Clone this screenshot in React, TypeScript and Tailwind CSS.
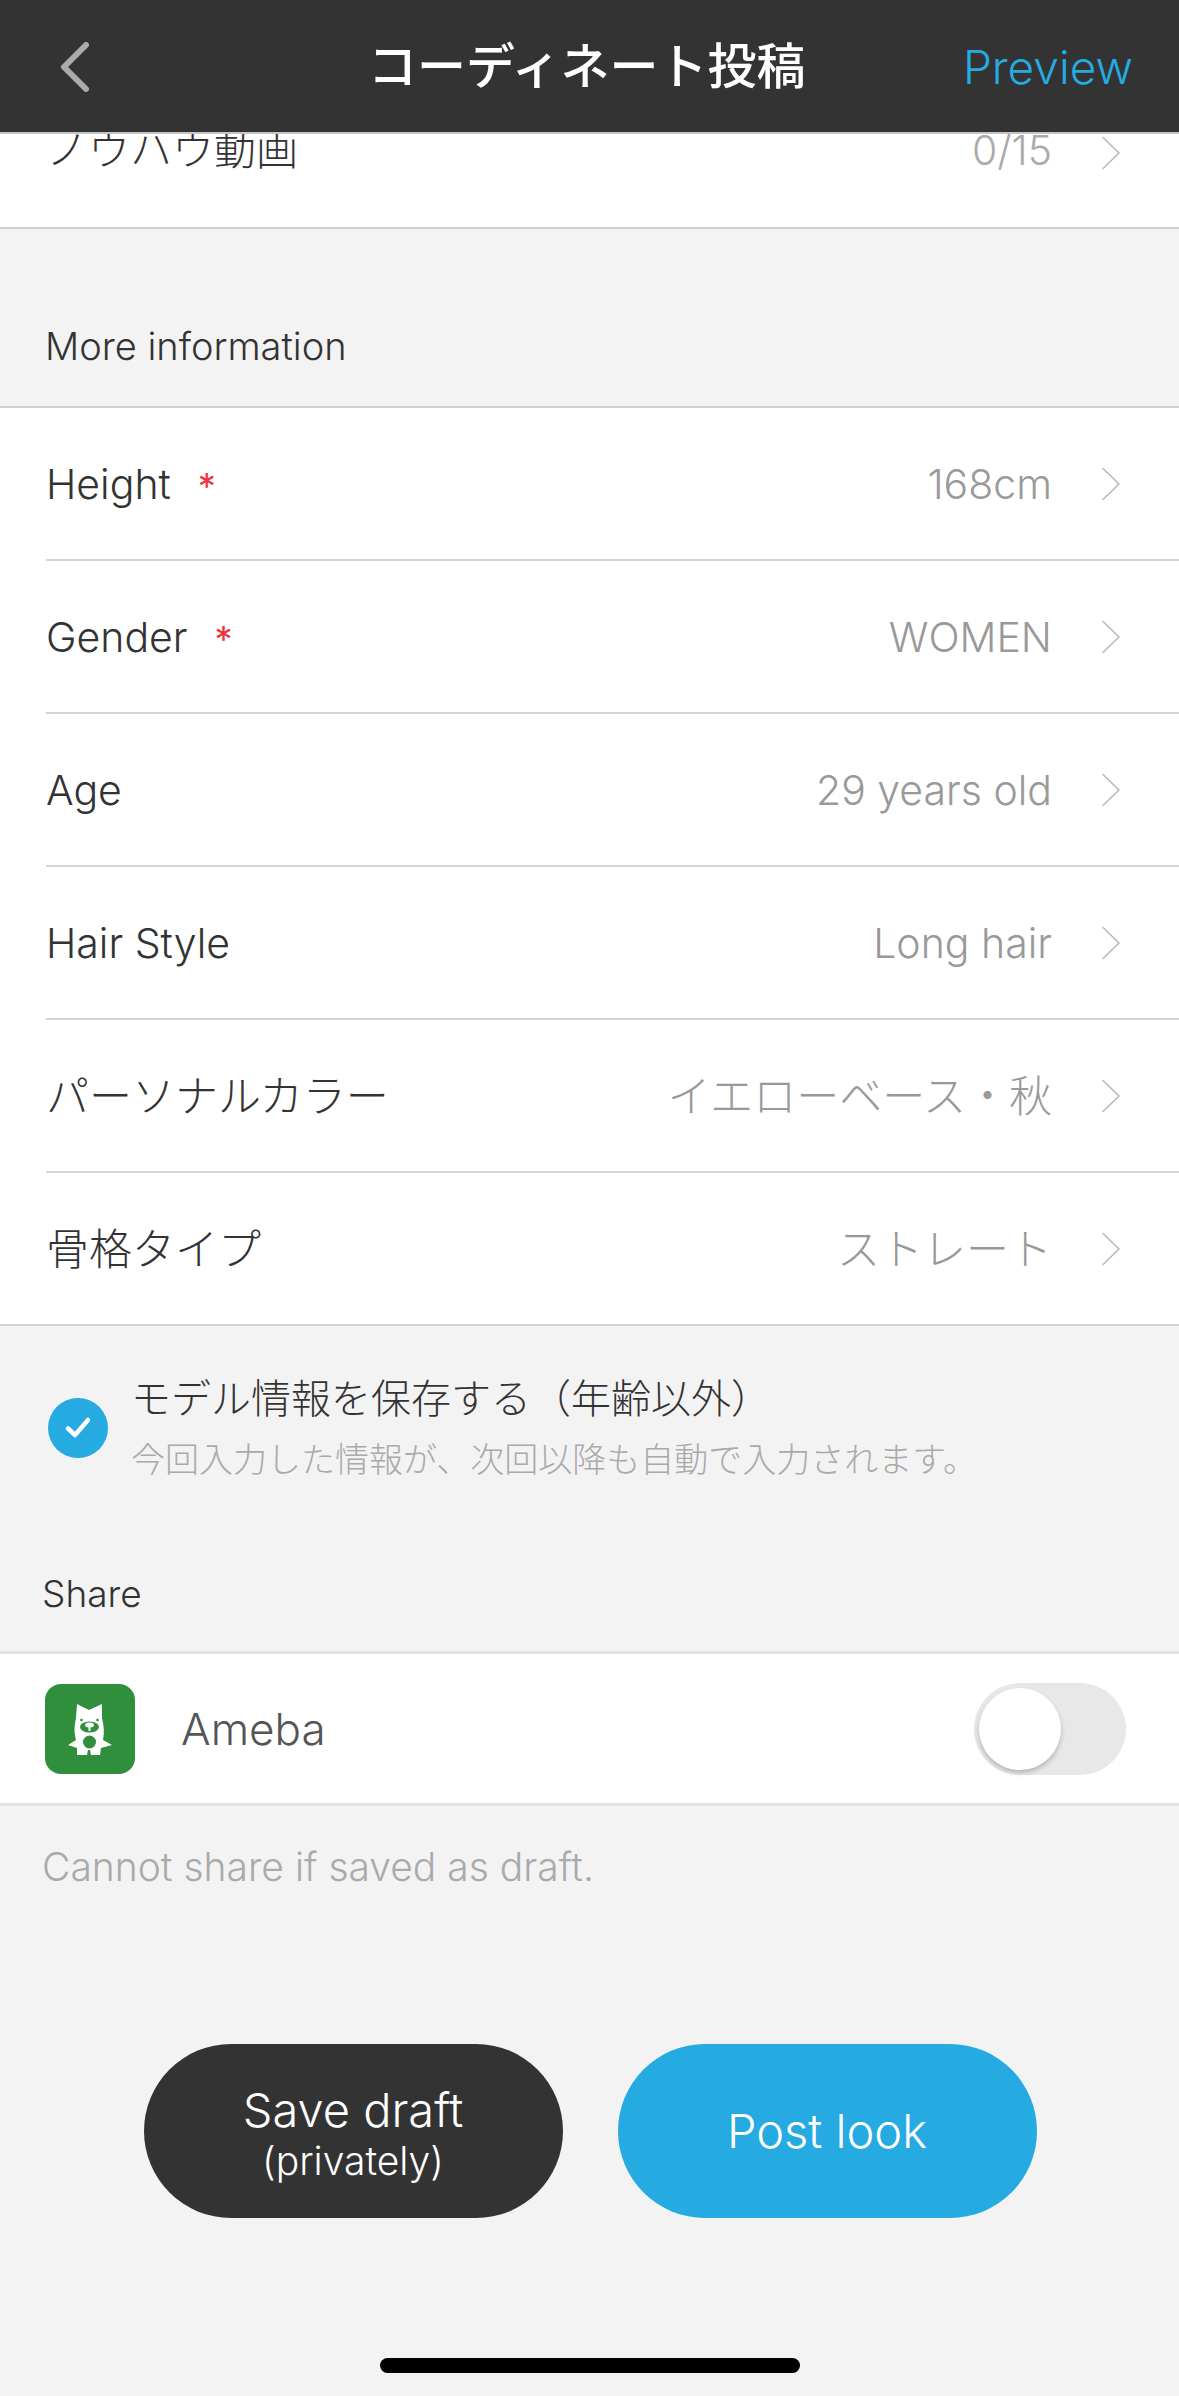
import React from 'react'

const font = "font-['Inter','Noto_Sans_CJK_JP',sans-serif]"

function Chevron() {
    return (
        <svg width="20" height="34" viewBox="0 0 20 34" fill="none" className="shrink-0">
            <path d="M2 1.5 L18 17 L2 32.5" stroke="#b8b8b8" strokeWidth="1.6" strokeLinecap="round" strokeLinejoin="round" />
        </svg>
    )
}

function Row({ label, value, required, last, jp }: { label: string; value: string; required?: boolean; last?: boolean; jp?: boolean }) {
    const size = jp ? "text-[43px]" : "text-[41px]"
    return (
        <div className={last ? "flex h-[153px] border-b-2 border-[#d4d4d4] pl-[46px]" : "flex h-[153px] pl-[46px]"}>
            <div className={last ? "flex flex-1 items-center pr-[58px]" : "flex flex-1 items-center border-b-2 border-[#d4d4d4] pr-[58px]"}>
                <span className={`${size} font-light leading-[50px] text-[#333]`}>{label}</span>
                {required && <span className="ml-[27px] mt-[4px] text-[36px] leading-[40px] text-[#ee3344]">*</span>}
                <span className={`${size} ml-auto mr-[49px] font-light leading-[50px] text-[#999]`}>{value}</span>
                <Chevron />
            </div>
        </div>
    )
}

function AmebaLogo() {
    return (
        <svg width="90" height="90" viewBox="0 0 90 90" className="shrink-0">
            <rect width="90" height="90" rx="16" fill="#2f8f3d" />
            <path d="M32 20 L44 26 L57 20 L57 34 Q60 46 58 56 L67 61 L56 64 L55 71 L46 71 L45 66 L43 66 L42 71 L32 71 L32 64 L23 61 L31 56 Q28 46 31 34 Z" fill="#fff" />
            <ellipse cx="44.5" cy="43" rx="9.5" ry="5.5" fill="#2f8f3d" />
            <ellipse cx="44.5" cy="41" rx="4.5" ry="2.5" fill="#fff" />
            <rect x="43.5" y="42" width="2" height="5" fill="#fff" />
            <circle cx="44.5" cy="58" r="6.5" fill="#2f8f3d" />
            <circle cx="36.5" cy="36" r="1.3" fill="#2f8f3d" />
            <circle cx="52.5" cy="36" r="1.3" fill="#2f8f3d" />
        </svg>
    )
}

export default function App() {
    return (
        <div className={`flex h-[2396px] w-[1179px] flex-col overflow-hidden bg-[#f3f3f3] ${font}`}>
            <div className="relative z-10 flex h-[134px] shrink-0 items-center border-b-2 border-[#c4c4c4] bg-[#333] pl-[60px] pr-[46px] pt-[2px]">
                <svg width="30" height="50" viewBox="0 0 30 50" fill="none" className="shrink-0">
                    <path d="M26 3 L4 25 L26 47" stroke="#ababab" strokeWidth="6" strokeLinecap="round" strokeLinejoin="round" />
                </svg>
                <div className="ml-[278px] text-[49px] font-medium leading-[60px] text-white">コーディネート投稿</div>
                <div className="ml-auto text-[46px] font-light leading-[60px] text-[#25aae1]">Preview</div>
            </div>

            <div className="flex h-[95px] shrink-0 items-start overflow-hidden border-b-2 border-[#d0d0d0] bg-white pl-[46px] pr-[58px]">
                <span className="-mt-[9px] text-[42px] font-light leading-[50px] text-[#333]">ノウハウ動画</span>
                <span className="-mt-[9px] ml-auto mr-[49px] text-[41px] font-light leading-[50px] text-[#aaa]">0/15</span>
                <div className="mt-[2px]"><Chevron /></div>
            </div>

            <div className="flex h-[179px] shrink-0 items-end border-b-2 border-[#d0d0d0] pb-[37px] pl-[45px]">
                <span className="text-[38px] font-light leading-[46px] text-[#333]">More information</span>
            </div>

            <div className="shrink-0 bg-white">
                <Row label="Height" value="168cm" required />
                <Row label="Gender" value="WOMEN" required />
                <Row label="Age" value="29 years old" />
                <Row label="Hair Style" value="Long hair" />
                <Row label="パーソナルカラー" value="イエローベース・秋" jp />
                <Row label="骨格タイプ" value="ストレート" last jp />
            </div>

            <div className="mt-[49px] flex shrink-0 items-center pl-[48px]">
                <div className="flex h-[60px] w-[60px] shrink-0 items-center justify-center rounded-full bg-[#25aae1]">
                    <svg width="30" height="30" viewBox="0 0 30 30" fill="none">
                        <path d="M5 15.5 L12 22 L25 7" stroke="#fff" strokeWidth="4.5" strokeLinecap="round" strokeLinejoin="round" />
                    </svg>
                </div>
                <div className="ml-[23px] flex flex-col">
                    <span className="text-[40px] font-light leading-[48px] text-[#333]">モデル情報を保存する（年齢以外）</span>
                    <span className="mt-[17px] text-[34px] font-light leading-[40px] text-[#aaa]">今回入力した情報が、次回以降も自動で入力されます。</span>
                </div>
            </div>

            <div className="mt-[91px] shrink-0 pl-[42px] text-[37px] font-light leading-[46px] text-[#333]">Share</div>

            <div className="mt-[34px] flex h-[155px] shrink-0 items-center border-y-[3px] border-[#e2e2e2] bg-white pl-[45px] pr-[53px]">
                <AmebaLogo />
                <span className="ml-[46px] text-[44px] font-light leading-[54px] text-[#555]">Ameba</span>
                <div className="ml-auto flex h-[92px] w-[152px] items-center rounded-full bg-[#e8e8e8] pl-[5px]">
                    <div className="h-[82px] w-[82px] rounded-full bg-white shadow-[0_3px_5px_rgba(0,0,0,0.22)]" />
                </div>
            </div>

            <div className="mt-[38px] shrink-0 pl-[42px] text-[39px] font-light leading-[46px] text-[#aaa]">Cannot share if saved as draft.</div>

            <div className="mt-[154px] flex shrink-0 justify-center gap-[55px] pl-[1px]">
                <button className="flex h-[174px] w-[419px] flex-col items-center justify-center rounded-full bg-[#333] pt-[3px] text-white">
                    <span className="text-[47px] font-light leading-[56px]">Save draft</span>
                    <span className="text-[39px] font-light leading-[46px]">(privately)</span>
                </button>
                <button className="flex h-[174px] w-[419px] items-center justify-center rounded-full bg-[#25aae1] text-[47px] font-light text-white">Post look</button>
            </div>

            <div className="mt-[140px] flex shrink-0 justify-center">
                <div className="h-[15px] w-[420px] rounded-full bg-black" />
            </div>
        </div>
    )
}
